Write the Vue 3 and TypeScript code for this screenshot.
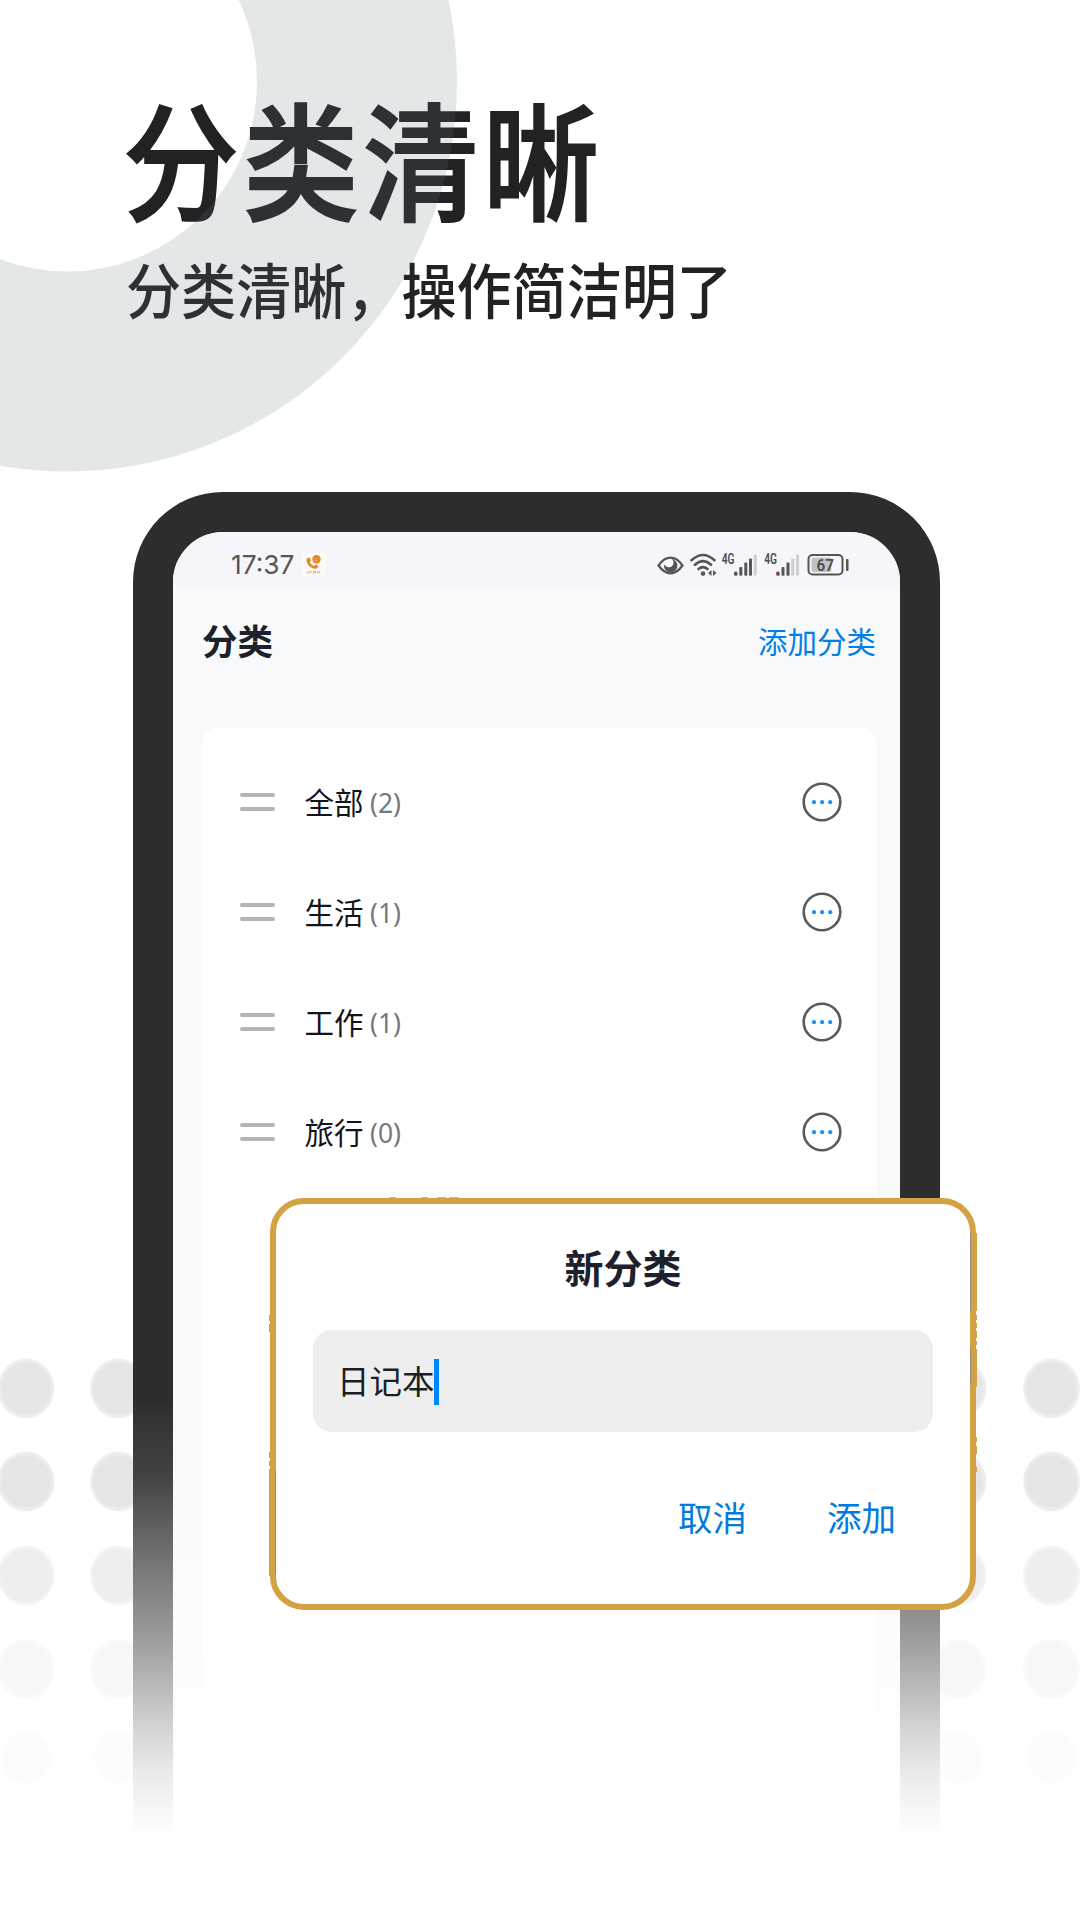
<script setup lang="ts">
interface Category {
  name: string
  count: number
}

const categories: Category[] = [
  { name: '全部', count: 2 },
  { name: '生活', count: 1 },
  { name: '工作', count: 1 },
  { name: '旅行', count: 0 },
]

const dotColumns: number[] = [26, 118.5, 958, 1051.5]
const dotRows = [
  { y: 1388.5, r: 28.5, fill: '#e5e7e7' },
  { y: 1481.5, r: 28.5, fill: '#e5e6e8' },
  { y: 1575.5, r: 28.5, fill: '#eeeeee' },
  { y: 1669, r: 28.5, fill: '#f7f7f7' },
  { y: 1757, r: 25, fill: '#fcfcfc' },
]
</script>

<template>
  <main class="poster">
    <svg class="dots" width="1080" height="1920" viewBox="0 0 1080 1920">
      <g v-for="row in dotRows" :key="row.y" :fill="row.fill">
        <g v-for="x in dotColumns" :key="x">
          <ellipse :cx="x" :cy="row.y" :rx="row.r" :ry="row.r + 1.5" opacity="0.6" />
          <ellipse :cx="x" :cy="row.y" :rx="row.r - 1.5" :ry="row.r - 0.5" opacity="0.5" />
          <ellipse :cx="x" :cy="row.y" :rx="row.r - 3.5" :ry="row.r - 2.5" />
        </g>
      </g>
    </svg>

    <header class="hero">
      <h1>分类清晰</h1>
      <p>分类清晰，操作简洁明了</p>
    </header>

    <svg class="ring" width="480" height="480" viewBox="0 0 480 480">
      <circle cx="67" cy="81.5" r="290" fill="none" stroke="#60767c" stroke-opacity="0.176" stroke-width="200" />
    </svg>

    <section class="phone">
      <div class="screen">
        <div class="status">
          <span class="time">17:37</span>
          <svg class="app-badge" width="24" height="24" viewBox="0 0 24 24">
            <rect width="24" height="24" rx="4" fill="#fbf9f9" />
            <path d="M5 5.2 7.6 4.6 9 7.4 7.6 9.2Q9.2 12 12.2 13L14 11.6 16.4 13.2Q15.6 16.2 12.4 15.8 6 14.4 4.6 8.2Q4.300 6 5 5.200Z" fill="#e8861c" />
            <circle cx="14.500" cy="6.200" r="4.200" fill="#e8861c" />
            <path d="M11.500 5.500h6M12 7.500h4" stroke="#f0a860" stroke-width="0.700" />
            <path d="M4.500 20.500l2-2 1 1.500 2.500-2M11 20.500l1.500-2.500 1.500 2.500M11.500 18.500h2.500M15.500 20.500l1-2.500 1.500 2.500" stroke="#e8a050" stroke-width="1" fill="none" />
          </svg>
          <svg class="icons" width="196" height="28" viewBox="654 551 196 28">
            <g fill="none" stroke="#555557" stroke-width="2.200">
              <path d="M658.500 565.500Q664 557.700 670.500 557.700T682.500 565.500Q677 573.300 670.500 573.300T658.500 565.500Z" />
              <path d="M691.500 560.200Q703 549.800 714.500 560.200M695 564.800Q703 557.300 711 564.800M698.500 569Q703 565.200 707.500 569" stroke-width="2.600" stroke-linecap="round" />
              <rect x="808.500" y="555" width="34" height="19.500" rx="4" stroke-width="2" />
            </g>
            <path d="M671 558.800A6.800 6.800 0 1 1 664 564.200Q665 567 668 567.200A4.500 4.500 0 0 0 671 558.800Z" fill="#555557" />
            <circle cx="703" cy="573.600" r="2.300" fill="#555557" />
            <path d="M711.500 570v6l-3.500-3zM713 570v6l3.500-3z" fill="#555557" />
            <g fill="#555557">
              <rect x="734" y="571.500" width="3.500" height="4.300" rx="1.500" />
              <rect x="739.300" y="567" width="3" height="8.800" rx="1" />
              <rect x="744.300" y="562.500" width="3" height="13.300" rx="1" />
              <rect x="749" y="558.500" width="3" height="17.300" rx="1" />
              <rect x="776.200" y="571.500" width="3.500" height="4.300" rx="1.500" />
              <rect x="781.500" y="567" width="3" height="8.800" rx="1" />
              <rect x="786.500" y="562.500" width="3" height="13.300" rx="1" />
              <rect x="846" y="559" width="2.500" height="12" rx="1" />
            </g>
            <g fill="#cfcfd2">
              <rect x="753.800" y="554.500" width="3" height="21.300" rx="1" />
              <rect x="791.200" y="558.500" width="3" height="17.300" rx="1" />
              <rect x="796" y="554.500" width="3" height="21.300" rx="1" />
            </g>
            <rect x="811.500" y="557.500" width="20" height="14.500" rx="2" fill="#c2c2c5" />
            <g class="icon-text" fill="#4c4c4e">
              <text x="721.700" y="564.200" font-size="14" textLength="12.800" lengthAdjust="spacingAndGlyphs">4G</text>
              <text x="764.200" y="564.200" font-size="14" textLength="12.800" lengthAdjust="spacingAndGlyphs">4G</text>
              <text x="816.500" y="571" font-size="17" textLength="17.500" lengthAdjust="spacingAndGlyphs">67</text>
            </g>
          </svg>
        </div>

        <div class="titlebar">
          <h2>分类</h2>
          <a>添加分类</a>
        </div>

        <ul class="list">
          <li v-for="item in categories" :key="item.name">
            <span class="handle"></span>
            <span class="name">{{ item.name }}</span>
            <span class="count">({{ item.count }})</span>
            <svg class="more" width="40" height="40" viewBox="0 0 40 40">
              <circle cx="20" cy="20" r="18.300" fill="none" stroke="#5a5a5a" stroke-width="2.600" />
              <g fill="#2090f0">
                <circle cx="12" cy="20.200" r="2.100" />
                <circle cx="20.100" cy="20.200" r="2.100" />
                <circle cx="28.200" cy="20.200" r="2.100" />
              </g>
            </svg>
          </li>
        </ul>
      </div>
      <div class="fade"></div>
    </section>

    <section class="dialog">
      <h3>新分类</h3>
      <div class="field"><span>日记本</span><i class="caret"></i></div>
      <div class="actions">
        <a>取消</a>
        <a>添加</a>
      </div>
      <!-- uneven outer edge of the gold frame -->
      <svg class="edge" width="710" height="416" viewBox="268 1196 710 416">
        <g fill="none" stroke="#d3a243" stroke-width="1">
          <path d="M389 1197.500h7M421 1197.500h7M437 1197.500h9M449 1197.500h10" opacity="0.8" />
          <path d="M976.500 1233v78M976.500 1315v5M976.500 1323v5M976.500 1331v7M976.500 1341v4M976.500 1349v38M976.500 1437v5M976.500 1446v8M976.500 1467v5" />
          <path d="M269.500 1315v6M269.500 1324v8M269.500 1452v6M269.500 1461v5M269.500 1469v107" />
        </g>
        <path d="M970.500 1233v78M970.500 1349v36M275.500 1470v104" fill="none" stroke="#8f8b84" stroke-width="1" />
      </svg>
    </section>
  </main>
</template>

<style>
body {
  margin: 0;
  background: #fff;
}
</style>

<style scoped>
.poster {
  position: relative;
  width: 1080px;
  height: 1920px;
  overflow: hidden;
  background: #fff;
  font-family: "Noto Sans CJK SC", sans-serif;
  display: flex;
  flex-direction: column;
}
h1, h2, h3, p, ul {
  margin: 0;
  padding: 0;
}
.dots, .ring {
  position: absolute;
  left: 0;
  top: 0;
}
.hero {
  flex: none;
  box-sizing: border-box;
  height: 492px;
  padding: 81px 0 0 123px;
  color: #222224;
  white-space: nowrap;
}
.hero h1 {
  font-size: 127.500px;
  line-height: 150px;
  font-weight: 500;
  letter-spacing: 4.700px;
  -webkit-text-stroke: 2px #222224;
  transform: scaleX(0.908);
  transform-origin: 0 0;
}
.hero p {
  margin: 17px 0 0 3px;
  font-size: 60px;
  line-height: 80px;
  font-weight: 500;
  transform: scaleX(0.918);
  transform-origin: 0 0;
}
.phone {
  position: relative;
  flex: none;
  box-sizing: border-box;
  width: 807px;
  height: 1428px;
  margin-left: 133px;
  padding: 40px 40px 0;
  background: #2d2d2d;
  border-radius: 90px 90px 0 0;
}
.screen {
  height: 100%;
  overflow: hidden;
  background: #f8f9fb;
  border-radius: 50px 50px 0 0;
}
.status {
  display: flex;
  align-items: center;
  height: 54px;
  padding: 0 50px 0 58px;
  background: #f6f5fa;
}
.time {
  width: 63px;
  font-family: Inter, sans-serif;
  font-size: 26.300px;
  line-height: 43px;
  color: #555557;
  padding-top: 11px;
}
.app-badge {
  margin: 12px 0 0 8px;
}
.icons {
  margin: 12px 0 0 auto;
}
.icon-text {
  font-family: Roboto, sans-serif;
  font-weight: 600;
}
.titlebar {
  display: flex;
  align-items: center;
  justify-content: space-between;
  height: 108px;
  padding: 0 24px 0 29px;
}
.titlebar h2 {
  font-size: 35.500px;
  line-height: 50px;
  font-weight: 700;
  color: #1d212b;
}
.titlebar a {
  margin-top: -1px;
  font-size: 29.500px;
  line-height: 44px;
  color: #007fe6;
}
.list {
  list-style: none;
  height: 1200px;
  margin: 34px 23px 0 29px;
  padding-top: 19px;
  background: #fff;
  border-radius: 16px 16px 0 0;
}
.list li {
  display: flex;
  align-items: center;
  height: 110px;
  padding: 0 35px 0 38px;
}
.handle {
  box-sizing: border-box;
  width: 35px;
  height: 18px;
  display: flex;
  flex-direction: column;
  justify-content: space-between;
}
.handle::before, .handle::after {
  content: "";
  height: 4px;
  border-radius: 2px;
  background: #aeb6ba;
}
.name {
  margin: -2px 0 0 29.500px;
  font-size: 29.500px;
  line-height: 44px;
  color: #12141c;
}
.count {
  margin: 1px 0 0 6.500px;
  font-family: "Noto Sans", sans-serif;
  font-size: 26.500px;
  line-height: 44px;
  color: #76797d;
}
.more {
  margin-left: auto;
}
.fade {
  position: absolute;
  left: 0;
  right: 0;
  top: 908px;
  bottom: 0;
  background: linear-gradient(
    rgba(255, 255, 255, 0) 0,
    rgba(255, 255, 255, 0.030) 20px,
    rgba(255, 255, 255, 0.100) 75px,
    rgba(255, 255, 255, 0.200) 110px,
    rgba(255, 255, 255, 0.360) 170px,
    rgba(255, 255, 255, 0.520) 235px,
    rgba(255, 255, 255, 0.680) 290px,
    rgba(255, 255, 255, 0.800) 330px,
    rgba(255, 255, 255, 0.900) 372px,
    #fff 435px
  );
}
.dialog {
  position: absolute;
  left: 270px;
  top: 1198px;
  box-sizing: border-box;
  width: 706px;
  height: 412px;
  padding: 34px 37px 0;
  border: 6px solid #d3a243;
  border-radius: 34px;
  background: #fff;
}
.dialog h3 {
  font-size: 39px;
  line-height: 56px;
  font-weight: 700;
  text-align: center;
  color: #1d212b;
}
.field {
  display: flex;
  align-items: center;
  box-sizing: border-box;
  height: 102px;
  margin-top: 36px;
  padding-left: 24px;
  border-radius: 19px;
  background: #eeeeee;
}
.field span {
  margin-top: -2px;
  font-size: 32.500px;
  line-height: 48px;
  color: #1a1e26;
}
.caret {
  width: 5px;
  height: 46px;
  margin: 2px 0 0 -1px;
  background: #0085ff;
}
.actions {
  display: flex;
  justify-content: flex-end;
  gap: 80px;
  margin-top: 59px;
  padding-right: 37px;
}
.actions a {
  font-size: 34.500px;
  line-height: 50px;
  color: #007be0;
}
.edge {
  position: absolute;
  left: -8px;
  top: -8px;
}
</style>
